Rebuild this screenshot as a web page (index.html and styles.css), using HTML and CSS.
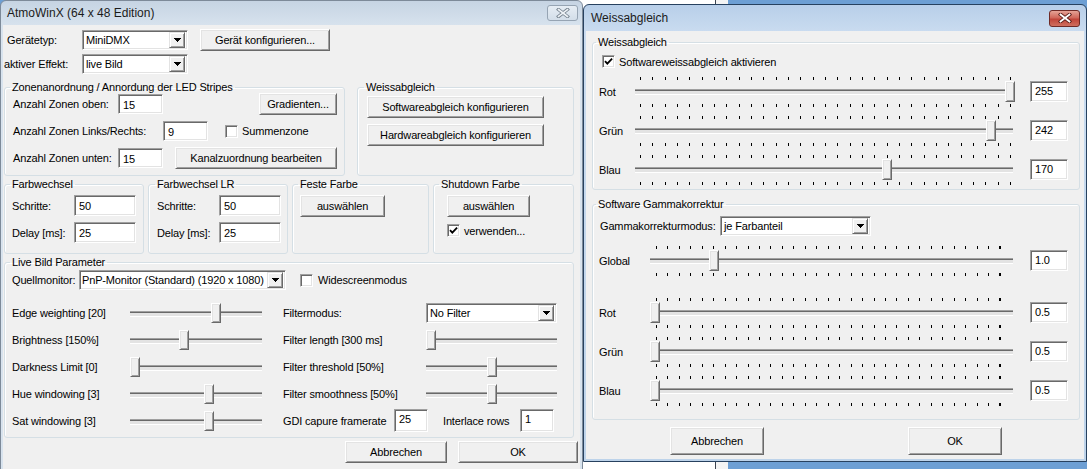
FILE: index.html
```html
<!DOCTYPE html>
<html lang="de">
<head>
<meta charset="utf-8">
<title>AtmoWinX</title>
<link rel="stylesheet" href="styles.css">
</head>
<body>
<div class="desktop">
  <div class="backdrop-win"></div>

  <!-- Main window -->
  <section class="win main inactive">
    <header class="titlebar">
      <span class="title">AtmoWinX (64 x 48 Edition)</span>
      <span class="close"><svg width="14" height="10" viewBox="0 0 14 10"><path class="x-out" d="M2.5 1.5L11.5 8.5M11.5 1.5L2.5 8.5"/><path class="x-in" d="M2.5 1.5L11.5 8.5M11.5 1.5L2.5 8.5"/></svg></span>
    </header>
    <div class="client">
      <div class="row r1">
        <span class="lbl lbl-dev">Gerätetyp:</span>
        <div class="combo cb-top"><span class="combo-val">MiniDMX</span><span class="drop"><svg width="7" height="4" viewBox="0 0 7 4"><path d="M0 0h7v1h-1v1h-1v1h-1v1h-1v-1h-1v-1h-1v-1h-1z"/></svg></span></div>
        <span class="btn btn-cfg">Gerät konfigurieren...</span>
      </div>
      <div class="row r2">
        <span class="lbl lbl-fx">aktiver Effekt:</span>
        <div class="combo cb-top"><span class="combo-val">live Bild</span><span class="drop"><svg width="7" height="4" viewBox="0 0 7 4"><path d="M0 0h7v1h-1v1h-1v1h-1v1h-1v-1h-1v-1h-1v-1h-1z"/></svg></span></div>
      </div>

      <div class="groups-a">
        <fieldset class="grp zone">
          <legend>Zonenanordnung / Annordung der LED Stripes</legend>
          <div class="line">
            <span class="lbl w105">Anzahl Zonen oben:</span>
            <span class="tb tb-zone">15</span>
            <span class="btn btn-grad">Gradienten...</span>
          </div>
          <div class="line">
            <span class="lbl w150">Anzahl Zonen Links/Rechts:</span>
            <span class="tb tb-zone">9</span>
            <span class="chk chk-sum"></span>
            <span class="chk-text">Summenzone</span>
          </div>
          <div class="line">
            <span class="lbl w105">Anzahl Zonen unten:</span>
            <span class="tb tb-zone">15</span>
            <span class="btn btn-kanal">Kanalzuordnung bearbeiten</span>
          </div>
        </fieldset>
        <fieldset class="grp wb-main">
          <legend>Weissabgleich</legend>
          <span class="btn btn-wb first">Softwareabgleich konfigurieren</span>
          <span class="btn btn-wb">Hardwareabgleich konfigurieren</span>
        </fieldset>
      </div>

      <div class="groups-b">
        <fieldset class="grp fw">
          <legend>Farbwechsel</legend>
          <div class="line l-first">
            <span class="lbl w-step">Schritte:</span>
            <span class="tb tb-fw">50</span>
          </div>
          <div class="line l-second">
            <span class="lbl w-step">Delay [ms]:</span>
            <span class="tb tb-fw">25</span>
          </div>
        </fieldset>
        <fieldset class="grp fw-lr">
          <legend>Farbwechsel LR</legend>
          <div class="line l-first">
            <span class="lbl w-step">Schritte:</span>
            <span class="tb tb-fw">50</span>
          </div>
          <div class="line l-second">
            <span class="lbl w-step">Delay [ms]:</span>
            <span class="tb tb-fw">25</span>
          </div>
        </fieldset>
        <fieldset class="grp fixed">
          <legend>Feste Farbe</legend>
          <span class="btn btn-pick">auswählen</span>
        </fieldset>
        <fieldset class="grp shutdown">
          <legend>Shutdown Farbe</legend>
          <span class="btn btn-pick2">auswählen</span>
          <div class="line l-chk">
            <span class="chk on"><svg width="11" height="11" viewBox="0 0 11 11"><path d="M2 5.2l2.3 2.4 4.8-5"/></svg></span>
            <span class="chk-text">verwenden...</span>
          </div>
        </fieldset>
      </div>

      <fieldset class="grp live">
        <legend>Live Bild Parameter</legend>
        <div class="line l-src">
          <span class="lbl w-src">Quellmonitor:</span>
          <div class="combo cb-src"><span class="combo-val">PnP-Monitor (Standard) (1920 x 1080)</span><span class="drop"><svg width="7" height="4" viewBox="0 0 7 4"><path d="M0 0h7v1h-1v1h-1v1h-1v1h-1v-1h-1v-1h-1v-1h-1z"/></svg></span></div>
          <span class="chk chk-wide"></span>
          <span class="chk-text wide-text">Widescreenmodus</span>
        </div>
        <div class="params">
          <span class="lbl">Edge weighting [20]</span>
          <div class="slider plain" style="--v:.66"><span class="thumb"></span></div>
          <span class="lbl rlbl">Filtermodus:</span>
          <div class="combo cb-filter"><span class="combo-val">No Filter</span><span class="drop"><svg width="7" height="4" viewBox="0 0 7 4"><path d="M0 0h7v1h-1v1h-1v1h-1v1h-1v-1h-1v-1h-1v-1h-1z"/></svg></span></div>

          <span class="lbl">Brightness [150%]</span>
          <div class="slider plain" style="--v:.4"><span class="thumb"></span></div>
          <span class="lbl rlbl">Filter length [300 ms]</span>
          <div class="slider plain" style="--v:0"><span class="thumb"></span></div>

          <span class="lbl">Darkness Limit [0]</span>
          <div class="slider plain" style="--v:0"><span class="thumb"></span></div>
          <span class="lbl rlbl">Filter threshold [50%]</span>
          <div class="slider plain" style="--v:.5"><span class="thumb"></span></div>

          <span class="lbl">Hue windowing [3]</span>
          <div class="slider plain" style="--v:.61"><span class="thumb"></span></div>
          <span class="lbl rlbl">Filter smoothness [50%]</span>
          <div class="slider plain" style="--v:.5"><span class="thumb"></span></div>

          <span class="lbl">Sat windowing [3]</span>
          <div class="slider plain" style="--v:.61"><span class="thumb"></span></div>
          <div class="capture">
            <span class="lbl w-gdi">GDI capure framerate</span>
            <span class="tb tb-small">25</span>
            <span class="lbl w-rows">Interlace rows</span>
            <span class="tb tb-small">1</span>
          </div>
        </div>
      </fieldset>

      <div class="footer">
        <span class="btn btn-cancel">Abbrechen</span>
        <span class="btn btn-ok">OK</span>
      </div>
    </div>
  </section>

  <!-- White balance dialog -->
  <section class="win dlg active">
    <header class="titlebar">
      <span class="title">Weissabgleich</span>
      <span class="close"><svg width="14" height="10" viewBox="0 0 14 10"><path class="x-out" d="M2.5 1.5L11.5 8.5M11.5 1.5L2.5 8.5"/><path class="x-in" d="M2.5 1.5L11.5 8.5M11.5 1.5L2.5 8.5"/></svg></span>
    </header>
    <div class="client">
      <fieldset class="grp wb">
        <legend>Weissabgleich</legend>
        <div class="line l-enable">
          <span class="chk on"><svg width="11" height="11" viewBox="0 0 11 11"><path d="M2 5.2l2.3 2.4 4.8-5"/></svg></span>
          <span class="chk-text">Softwareweissabgleich aktivieren</span>
        </div>
        <div class="channels">
          <span class="lbl">Rot</span>
          <div class="slider ticked" style="--v:1"><span class="thumb"></span></div>
          <span class="tb tb-val">255</span>

          <span class="lbl">Grün</span>
          <div class="slider ticked" style="--v:.949"><span class="thumb"></span></div>
          <span class="tb tb-val">242</span>

          <span class="lbl">Blau</span>
          <div class="slider ticked" style="--v:.667"><span class="thumb"></span></div>
          <span class="tb tb-val">170</span>
        </div>
      </fieldset>

      <fieldset class="grp gamma">
        <legend>Software Gammakorrektur</legend>
        <div class="line l-mode">
          <span class="lbl w-mode">Gammakorrekturmodus:</span>
          <div class="combo cb-mode"><span class="combo-val">je Farbanteil</span><span class="drop"><svg width="7" height="4" viewBox="0 0 7 4"><path d="M0 0h7v1h-1v1h-1v1h-1v1h-1v-1h-1v-1h-1v-1h-1z"/></svg></span></div>
        </div>
        <div class="channels g-global">
          <span class="lbl">Global</span>
          <div class="slider ticked" style="--v:.166"><span class="thumb"></span></div>
          <span class="tb tb-val">1.0</span>
        </div>
        <div class="channels g-rgb">
          <span class="lbl">Rot</span>
          <div class="slider ticked" style="--v:0"><span class="thumb"></span></div>
          <span class="tb tb-val">0.5</span>

          <span class="lbl">Grün</span>
          <div class="slider ticked" style="--v:0"><span class="thumb"></span></div>
          <span class="tb tb-val">0.5</span>

          <span class="lbl">Blau</span>
          <div class="slider ticked" style="--v:0"><span class="thumb"></span></div>
          <span class="tb tb-val">0.5</span>
        </div>
      </fieldset>

      <div class="footer dlg-footer">
        <span class="btn btn-dlg cancel">Abbrechen</span>
        <span class="btn btn-dlg ok">OK</span>
      </div>
    </div>
  </section>
</div>
</body>
</html>
```
FILE: styles.css
```css
* { box-sizing: border-box; }

html, body {
  margin: 0;
  padding: 0;
}

body {
  width: 1087px;
  height: 469px;
  overflow: hidden;
  font-family: "Liberation Sans", Arial, sans-serif;
  font-size: 11px;
  letter-spacing: -0.15px;
  color: #000;
}

.desktop {
  position: relative;
  width: 1087px;
  height: 469px;
  overflow: hidden;
  background: #6d9fd4;
}

/* window peeking out behind the dialog */
.backdrop-win {
  position: absolute;
  left: 560px;
  top: 0;
  width: 156px;
  height: 469px;
  background: #fff;
  border-right: 1px solid #3c4450;
  box-shadow: 12px 0 0 #f4f4f4;
}

/* ---------- window frames ---------- */
.win {
  position: absolute;
  display: flex;
  flex-direction: column;
  border: 1px solid #5b6b7e;
  border-radius: 6px 6px 0 0;
  padding: 0 2px 2px;
}

.win.inactive {
  background: linear-gradient(#c6d4e3, #d8e3ee 26px, #d8e3ee);
  border-color: #7d8a99;
}

.win.active {
  background: linear-gradient(#b8cfe9, #cadcf0 28px, #bdd3ea);
  border-color: #27415f;
}

.main { left: 0; top: 0; width: 583px; height: 490px; }
.dlg { left: 583px; top: 4px; width: 504px; height: 458px; }

.titlebar {
  display: flex;
  align-items: center;
  justify-content: space-between;
  flex: none;
}

.main .titlebar { height: 24px; padding: 0 2px 0 4px; }
.dlg .titlebar { height: 26px; padding: 0 4px 0 5px; }

.title {
  font-size: 12px;
  letter-spacing: 0;
  color: #1b1b1b;
}

.close {
  display: flex;
  align-items: center;
  justify-content: center;
  width: 31px;
  height: 16px;
  border-radius: 3px;
}

.inactive .close {
  border: 1px solid #96a4b3;
  background: linear-gradient(#e6edf4, #d3dee9);
}

.active .close {
  height: 17px;
  border: 1px solid #6f2a26;
  background: linear-gradient(#e5a396, #d0685b 45%, #c0453a 55%, #cf6f5f);
}

.close path { fill: none; stroke-linecap: square; }
.inactive .x-out { stroke: #76838f; stroke-width: 3.4; }
.inactive .x-in { stroke: #eef2f6; stroke-width: 1.6; }
.active .x-out { stroke: #5a1f1a; stroke-width: 3.6; }
.active .x-in { stroke: #fff; stroke-width: 1.8; }

.client {
  flex: 1;
  background: #f0f0f0;
}

/* ---------- generic controls ---------- */
.row, .line {
  display: flex;
  align-items: center;
}

.lbl { white-space: nowrap; flex: none; }

.combo {
  display: flex;
  align-items: center;
  height: 20px;
  background: #fff;
  border: 1px solid;
  border-color: #a0a0a0 #fff #fff #a0a0a0;
  box-shadow: inset 1px 1px #696969, inset -1px -1px #e3e3e3;
  padding: 2px;
  flex: none;
}

.combo-val {
  flex: 1;
  padding-left: 1px;
  white-space: nowrap;
  overflow: hidden;
}

.drop {
  width: 16px;
  height: 16px;
  flex: none;
  display: flex;
  align-items: center;
  justify-content: center;
  background: #f0f0f0;
  border: 1px solid;
  border-color: #e3e3e3 #696969 #696969 #e3e3e3;
  box-shadow: inset 1px 1px #fff, inset -1px -1px #a0a0a0;
}

.drop svg { display: block; }

.tb {
  display: block;
  height: 20px;
  background: #fff;
  border: 1px solid;
  border-color: #a0a0a0 #fff #fff #a0a0a0;
  box-shadow: inset 1px 1px #696969, inset -1px -1px #e3e3e3;
  padding: 4px 0 0 4px;
  line-height: 12px;
  flex: none;
}

.btn {
  display: flex;
  align-items: center;
  justify-content: center;
  height: 22px;
  background: #f0f0f0;
  border: 1px solid;
  border-color: #fff #696969 #696969 #fff;
  box-shadow: inset 1px 1px #e3e3e3, inset -1px -1px #a0a0a0;
  white-space: nowrap;
  flex: none;
}

.chk {
  display: flex;
  align-items: center;
  justify-content: center;
  width: 13px;
  height: 13px;
  background: #fff;
  border: 1px solid;
  border-color: #a0a0a0 #fff #fff #a0a0a0;
  box-shadow: inset 1px 1px #696969, inset -1px -1px #e3e3e3;
  flex: none;
}

.chk svg path {
  fill: none;
  stroke: #000;
  stroke-width: 1.8;
}

.chk-text { margin-left: 4px; white-space: nowrap; }

/* group boxes */
.grp {
  margin: 0;
  min-width: 0;
  border: 1px solid #d5dfe5;
  border-radius: 3px;
  box-shadow: inset 1px 1px #fff;
}

.grp legend {
  padding: 0 2px;
  line-height: 13px;
}

/* trackbars */
.slider {
  position: relative;
  height: 27px;
}

.slider::before {
  content: "";
  position: absolute;
  left: 0;
  right: 0;
  top: 12px;
  height: 4px;
  border-top: 1px solid #a0a0a0;
  border-bottom: 1px solid #fff;
  background: linear-gradient(#696969 0 1px, #e3e3e3 1px);
}

.thumb {
  position: absolute;
  top: 4px;
  left: calc(var(--o, 0px) + var(--v) * var(--span, 122px));
  width: 10px;
  height: 20px;
  background: #f0f0f0;
  border: 1px solid;
  border-color: #fff #696969 #696969 #fff;
  box-shadow: inset 1px 1px #e3e3e3, inset -1px -1px #a0a0a0;
}

.slider.ticked {
  height: 39px;
  --o: 1px;
  --span: 369px;
}

.slider.ticked::before { top: 17px; }

.slider.ticked .thumb {
  top: 9px;
  height: 21px;
}

/* tick marks above and below the channel */
.slider.ticked::after {
  content: "";
  position: absolute;
  left: 5px;
  width: 371px;
  top: 5px;
  height: 30px;
  background-image:
    repeating-linear-gradient(90deg, #000 0 1px, transparent 1px var(--step, 12.333px)),
    repeating-linear-gradient(90deg, #000 0 1px, transparent 1px var(--step, 12.333px));
  background-size: 100% 3px;
  background-position: 0 0, 0 100%;
  background-repeat: no-repeat;
}

/* ---------- main window layout ---------- */
.main .client { padding: 4px 6px 0 1px; }

.r1 { height: 22px; }
.r2 { height: 20px; margin-top: 3px; }
.lbl-dev { width: 78px; padding-left: 3px; }
.lbl-fx { width: 78px; }
.cb-top { width: 106px; }
.btn-cfg { width: 130px; margin-left: 12px; }

.groups-a {
  display: grid;
  grid-template-columns: 341px 217px;
  column-gap: 12px;
  margin-top: 7px;
  height: 95px;
}

.zone { padding: 0 7px 0 8px; }
.zone legend { margin-left: -3px; }
.zone .line { height: 20px; }
.zone .line + .line { margin-top: 7px; }
.w105 { width: 105px; }
.w150 { width: 150px; }
.tb-zone { width: 45px; }
.btn-grad { width: 78px; margin-left: auto; }
.chk-sum { margin-left: 17px; }
.btn-kanal { width: 162px; margin-left: 12px; }

.wb-main { padding: 0 0 0 9px; }
.wb-main legend { margin-left: -3px; }
.btn-wb { width: 177px; margin-top: 6px; }
.btn-wb.first { margin-top: 2px; }

.groups-b {
  display: grid;
  grid-template-columns: 140px 140px 137px 141px;
  column-gap: 4px;
  margin-top: 2px;
  height: 76px;
}

.fw { padding: 0 0 0 7px; }
.fw-lr { padding: 0 0 0 8px; }
.fw legend, .fw-lr legend { margin-left: -2px; }
.l-first { margin-top: 4px; height: 21px; }
.l-second { margin-top: 6px; height: 21px; }
.w-step { width: 62px; }
.tb-fw { width: 62px; height: 21px; }

.fixed { padding: 0 0 0 7px; }
.fixed legend { margin-left: -2px; }
.btn-pick { width: 85px; margin-top: 4px; }

.shutdown { padding: 0 0 0 13px; }
.shutdown legend { margin-left: -8px; }
.btn-pick2 { width: 83px; margin-top: 4px; }
.l-chk { margin-top: 7px; height: 13px; }

.live {
  margin-top: 2px;
  height: 182px;
  padding: 0 0 0 7px;
}
.live legend { margin-left: -2px; }

.l-src { margin-top: 1px; height: 20px; }
.w-src { width: 67px; }
.cb-src { width: 207px; }
.cb-src .combo-val { padding-left: 0; }
.chk-wide { margin-left: 14px; }
.wide-text { margin-left: 5px; }

.params {
  display: grid;
  grid-template-columns: 118px 132px 164px 131px;
  grid-auto-rows: 27px;
  align-items: center;
  margin-top: 9px;
}

.rlbl { padding-left: 21px; }
.cb-filter { width: 131px; }

.capture {
  grid-column: 3 / 5;
  display: flex;
  align-items: center;
  padding-left: 21px;
}

.w-gdi { width: 111px; }
.w-rows { width: 77px; margin-left: 15px; }
.tb-small { width: 34px; height: 23px; padding-top: 3px; }

.footer {
  display: flex;
  justify-content: flex-end;
  gap: 11px;
  margin-top: 3px;
  margin-right: -4px;
}

.btn-cancel { width: 102px; }
.btn-ok { width: 120px; }

/* ---------- white balance dialog layout ---------- */
.dlg .client { padding: 5px 4px 0 6px; }

.wb { padding: 0 0 0 6px; }
.wb legend, .gamma legend { margin-left: -3px; }

.l-enable { margin-top: 6px; height: 13px; padding-left: 3px; }

.channels {
  display: grid;
  grid-template-columns: 36px 378px 38px;
  column-gap: 0;
  grid-auto-rows: 39px;
  align-items: center;
}

.channels .tb-val { margin-left: 17px; }
.wb .channels { margin-top: 4px; grid-template-columns: 36px 378px 55px; }

.tb-val { width: 38px; height: 21px; padding-top: 3px; }

.gamma {
  margin-top: 8px;
  padding: 0 0 9px 6px;
}

.l-mode { margin-top: 5px; height: 20px; }
.w-mode { width: 121px; padding-left: 1px; }
.cb-mode { width: 151px; }

.gamma .channels { grid-template-columns: 51px 363px 55px; }
.g-global { margin-top: 5px; }
.g-rgb { margin-top: 13px; }

.gamma .slider.ticked {
  --o: 0px;
  --span: 353px;
  --step: 11.45px;
}

.gamma .slider.ticked::after {
  left: 6px;
  width: 355px;
}

.dlg-footer {
  justify-content: flex-start;
  gap: 0;
  margin: 7px 0 0 0;
}

.btn-dlg { width: 94px; height: 28px; }
.btn-dlg.cancel { margin-left: 78px; }
.btn-dlg.ok { margin-left: 144px; }
```
